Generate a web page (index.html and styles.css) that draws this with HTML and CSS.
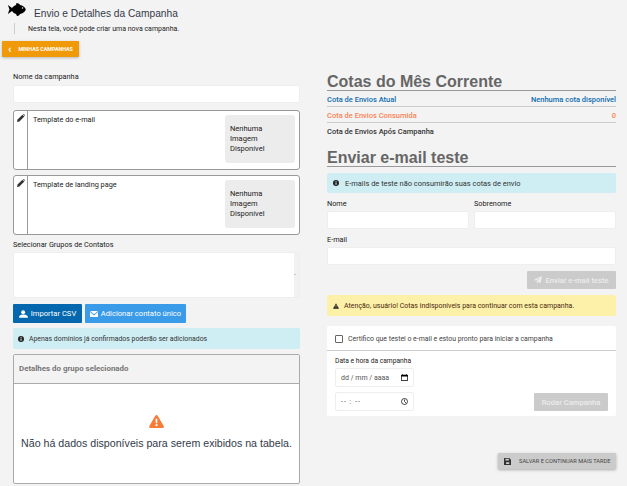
FILE: index.html
```html
<!DOCTYPE html>
<html lang="en">
<head>
    <meta charset="UTF-8">
    <meta name="viewport" content="width=device-width, initial-scale=1.0">
    <title>Envio e Detalhes da Campanha</title>
    <link rel="stylesheet" href="styles.css">
</head>
<body>
    <div class="page-header">
        <svg class="fish" viewBox="0 0 18 13"><path d="M0 2 L4 5 C5 3.500 6.500 2.500 8 2 L8.500 0 C10 0 11.500 .8 12 2 C14.500 2.300 17 4 17.800 6.500 C17 9 14.500 10.700 12 11 C11.500 12.500 10 13 9 13 L8 11 C6.500 10.500 5 9.500 4 8 L0 11 C.5 8.500 1 7.500 1.500 6.500 C1 5 .3 3.500 0 2 Z"/><circle cx="14.500" cy="5" r=".8" fill="#f3f3f3"/></svg>
        <div class="title">Envio e Detalhes da Campanha</div>
    </div>
    <div class="subtitle">Nesta tela, você pode criar uma nova campanha.</div>
    <a href="#" class="back-button"><span class="chevron">‹</span>MINHAS CAMPANHAS</a>

    <div class="columns">
        <div class="col-left">
            <label class="field-label">Nome da campanha</label>
            <input type="text" class="text-input name-input">

            <div class="template-card">
                <div class="edit-col">
                    <svg viewBox="0 0 10 10"><path d="M0 10 L.7 7 L6.800 .9 L9.100 3.200 L3 9.300 Z"/><path d="M7.400 .4 L8 0 C8.400 -.1 9.800 1.200 10 1.900 L9.600 2.600 Z"/></svg>
                </div>
                <div class="template-name">Template do e-mail</div>
                <div class="no-image">Nenhuma<br>Imagem<br>Disponível</div>
            </div>
            <div class="template-card">
                <div class="edit-col">
                    <svg viewBox="0 0 10 10"><path d="M0 10 L.7 7 L6.800 .9 L9.100 3.200 L3 9.300 Z"/><path d="M7.400 .4 L8 0 C8.400 -.1 9.800 1.200 10 1.900 L9.600 2.600 Z"/></svg>
                </div>
                <div class="template-name">Template de landing page</div>
                <div class="no-image">Nenhuma<br>Imagem<br>Disponível</div>
            </div>

            <label class="field-label groups-label">Selecionar Grupos de Contatos</label>
            <div class="groups-box"><div class="groups-scroll">.</div></div>

            <div class="button-row">
                <a href="#" class="btn btn-dark">
                    <svg viewBox="0 0 12 10" width="9" height="8"><circle cx="5.500" cy="2.600" r="2.600"/><path d="M0 10 C0 6.600 2 5.600 5.500 5.600 C9 5.600 12 6.600 12 10 Z"/></svg>
                    Importar CSV
                </a>
                <a href="#" class="btn btn-light">
                    <svg viewBox="0 0 12 9" width="8" height="6"><path d="M0 0 H12 L6 5 Z"/><path d="M0 1.600 L6 6.600 L12 1.600 V9 H0 Z"/></svg>
                    Adicionar contato único
                </a>
            </div>

            <div class="alert alert-info">
                <svg class="alert-icon" viewBox="0 0 10 10"><circle cx="5" cy="5" r="5"/><rect x="4.200" y="4.200" width="1.700" height="3.800" fill="#cfeef4"/><rect x="4.200" y="1.900" width="1.700" height="1.500" fill="#cfeef4"/></svg>
                Apenas domínios já confirmados poderão ser adicionados
            </div>

            <div class="details-panel">
                <div class="details-head">Detalhes do grupo selecionado</div>
                <div class="details-body">
                    <svg viewBox="0 0 16 14" width="15" height="13"><path fill-rule="evenodd" fill="#f97a37" d="M8 0 C8.600 0 9 .3 9.300 .8 L15.800 12 C16.300 13 15.700 14 14.600 14 H1.400 C.3 14 -.3 13 .2 12 L6.700 .8 C7 .3 7.400 0 8 0 Z M7 4 L7.200 8.800 H8.800 L9 4 Z M8 9.800 A1.200 1.200 0 1 0 8 12.200 A1.200 1.200 0 1 0 8 9.800 Z"/></svg>
                    <p>Não há dados disponíveis para serem exibidos na tabela.</p>
                </div>
            </div>
        </div>

        <div class="col-right">
            <h2 class="section-title">Cotas do Mês Corrente</h2>
            <div class="quota-row quota-blue"><span>Cota de Envios Atual</span><span>Nenhuma cota disponível</span></div>
            <div class="quota-row quota-orange"><span>Cota de Envios Consumida</span><span>0</span></div>
            <div class="quota-row quota-plain"><span>Cota de Envios Após Campanha</span></div>

            <h2 class="section-title test-title">Enviar e-mail teste</h2>
            <div class="alert alert-info test-alert">
                <svg class="alert-icon" viewBox="0 0 10 10"><circle cx="5" cy="5" r="5"/><rect x="4.200" y="4.200" width="1.700" height="3.800" fill="#cfeef4"/><rect x="4.200" y="1.900" width="1.700" height="1.500" fill="#cfeef4"/></svg>
                E-mails de teste não consumirão suas cotas de envio
            </div>

            <div class="name-grid">
                <div>
                    <label class="field-label">Nome</label>
                    <input type="text" class="text-input">
                </div>
                <div>
                    <label class="field-label">Sobrenome</label>
                    <input type="text" class="text-input">
                </div>
            </div>
            <label class="field-label email-label">E-mail</label>
            <input type="text" class="text-input">

            <div class="send-row">
                <a href="#" class="btn btn-disabled send-button">
                    <svg viewBox="0 0 10 10" width="8" height="8"><path d="M10 0 L8.400 8.800 L5.200 7.400 L3.800 9.600 L3.400 6.600 L8.200 2 L2.400 5.800 L0 4.800 Z"/></svg>
                    Enviar e-mail teste
                </a>
            </div>

            <div class="alert alert-warning">
                <svg class="alert-icon" viewBox="0 0 10 9"><path fill-rule="evenodd" d="M5 0 L10 9 H0 Z M4.500 3 V6 H5.500 V3 Z M4.500 6.800 V7.800 H5.500 V6.800 Z"/></svg>
                Atenção, usuário! Cotas indisponíveis para continuar com esta campanha.
            </div>

            <div class="launch-card">
                <label class="confirm-row"><span class="checkbox"></span>Certifico que testei o e-mail e estou pronto para iniciar a campanha</label>
                <div class="launch-body">
                    <div class="date-fields">
                        <label class="date-label">Data e hora da campanha</label>
                        <div class="date-input">
                            <span>dd / mm / aaaa</span>
                            <svg viewBox="0 0 10 10" width="7" height="7"><path fill-rule="evenodd" d="M1 1 H9 C9.500 1 10 1.500 10 2 V9 C10 9.500 9.500 10 9 10 H1 C.5 10 0 9.500 0 9 V2 C0 1.500 .5 1 1 1 Z M1 3.500 V9 H9 V3.500 Z"/><rect x="2" y="0" width="1" height="2"/><rect x="7" y="0" width="1" height="2"/></svg>
                        </div>
                        <div class="date-input">
                            <span class="time-text">-- : --</span>
                            <svg viewBox="0 0 10 10" width="7" height="7" fill="none" stroke="#222" stroke-width="1.200"><circle cx="5" cy="5" r="4.300"/><path d="M5 2.200 V5 L7.200 7.200"/></svg>
                        </div>
                    </div>
                    <a href="#" class="btn btn-disabled run-button">Rodar Campanha</a>
                </div>
            </div>

            <div class="save-row">
                <a href="#" class="save-button">
                    <svg viewBox="0 0 10 10" width="7" height="7"><path fill-rule="evenodd" d="M0 0 H7.500 L10 2.500 V10 H0 Z M2 1 V3.500 H7 V1 Z M3 6 V8.500 H7.500 V6 Z"/></svg>
                    SALVAR E CONTINUAR MAIS TARDE
                </a>
            </div>
        </div>
    </div>
</body>
</html>
```

FILE: styles.css
```css
* {
    box-sizing: border-box;
}
body {
    margin: 0;
    padding: 0;
    height: 486px;
    overflow: hidden;
    background-color: #f3f3f3;
    color: #333;
    font-family: Roboto, "Liberation Sans", sans-serif;
    font-size: 8px;
}
.page-header {
    display: flex;
    align-items: flex-start;
    height: 22px;
    padding: 3px 0 0 8px;
}
.fish {
    width: 18px;
    height: 13px;
}
.title {
    font-family: "Liberation Sans", sans-serif;
    font-size: 10.2px;
    color: #333a4a;
    margin: 5px 0 0 8px;
}
.subtitle {
    height: 11px;
    line-height: 12px;
    margin: 1px 0 0 14px;
    padding-left: 13px;
    border-left: 1px solid #ccc;
    color: #222;
    font-size: 7px;
}
.back-button {
    display: flex;
    align-items: center;
    width: 77px;
    height: 16px;
    margin: 7px 0 0 2px;
    padding-left: 6px;
    background-color: #f09a0a;
    border-radius: 1px;
    box-shadow: 0 1px 3px rgba(0, 0, 0, 0.25);
    color: white;
    font-size: 5.3px;
    font-weight: 700;
    text-decoration: none;
}
.chevron {
    font-size: 11px;
    line-height: 11px;
    margin-right: 7px;
}
.columns {
    display: flex;
    padding: 0 11px 0 13px;
    gap: 27px;
}
.col-left {
    width: 287px;
    padding-top: 15px;
}
.col-right {
    width: 289px;
    padding-top: 14px;
}
.field-label {
    display: block;
    height: 12px;
    line-height: 10px;
    color: #222;
    font-size: 7.3px;
}
.text-input {
    display: block;
    width: 100%;
    height: 18px;
    background-color: white;
    border: 1px solid #eee;
    border-radius: 2px;
}
.name-input {
    margin-top: 1px;
}
.template-card {
    display: flex;
    height: 60px;
    margin-top: 7px;
    background-color: white;
    border: 1px solid #999;
    border-radius: 3px;
}
.template-card + .template-card {
    margin-top: 5px;
}
.edit-col {
    width: 14px;
    border-right: 1px solid #999;
    padding: 3px 0 0 3px;
}
.edit-col svg {
    display: block;
    width: 8px;
    height: 8px;
    fill: #333;
}
.template-name {
    flex: 1;
    padding: 4px 0 0 5px;
    color: #222;
    font-size: 7.3px;
}
.no-image {
    width: 70px;
    height: 48px;
    margin: 4px 4px 0 0;
    padding: 9px 0 0 5px;
    background-color: #ececec;
    border-radius: 3px;
    color: #222;
    font-size: 7.5px;
    line-height: 10px;
}
.groups-label {
    margin-top: 5px;
}
.groups-box {
    display: flex;
    justify-content: flex-end;
    height: 46px;
    background-color: white;
    border: 1px solid #eee;
    border-radius: 2px;
}
.groups-scroll {
    width: 5px;
    padding-top: 16px;
    background-color: #f1f1f1;
    color: #555;
    font-size: 7px;
}
.button-row {
    display: flex;
    gap: 3px;
    margin-top: 6px;
}
.btn {
    display: flex;
    align-items: center;
    justify-content: center;
    gap: 3px;
    height: 19px;
    border-radius: 1px;
    color: white;
    font-size: 7.6px;
    text-decoration: none;
}
.btn svg {
    fill: currentColor;
}
.btn-dark {
    width: 69px;
    background-color: #0568ae;
}
.btn-light {
    width: 101px;
    background-color: #3a9be8;
}
.btn-disabled {
    background-color: #cbcbcb;
    color: #ececec;
    font-weight: 500;
}
.alert {
    display: flex;
    align-items: center;
    height: 21px;
    margin-top: 5px;
    padding-left: 5px;
    border-radius: 2px;
    color: #333;
    font-size: 6.9px;
}
.alert-icon {
    width: 6px;
    height: 6px;
    margin-right: 5px;
    flex-shrink: 0;
    fill: #222;
}
.alert-info {
    background-color: #cfeef4;
}
.alert-warning {
    margin-top: 6px;
    padding-left: 6px;
    background-color: #fdf0a8;
    color: #4a2a10;
    font-size: 7px;
}
.details-panel {
    height: 130px;
    margin-top: 5px;
    background-color: white;
    border: 1px solid #aaa;
    border-radius: 2px;
}
.details-head {
    height: 29px;
    padding: 9px 0 0 5px;
    background-color: #f3f3f3;
    border-bottom: 1px solid #aaa;
    color: #777;
    font-size: 7.9px;
    font-weight: 700;
}
.details-body {
    padding-top: 31px;
    text-align: center;
}
.details-body svg {
    display: block;
    margin: 0 auto;
}
.details-body p {
    margin: 9px 0 0 0;
    font-family: "Liberation Sans", sans-serif;
    font-size: 10.65px;
    color: #333a4a;
    white-space: nowrap;
}
.section-title {
    height: 20px;
    margin: 0;
    border-bottom: 1px solid #999;
    color: #666;
    font-family: "Liberation Sans", sans-serif;
    font-size: 16px;
    font-weight: 700;
    line-height: 22px;
}
.quota-row {
    display: flex;
    justify-content: space-between;
    align-items: center;
    height: 16px;
    padding-top: 1px;
    border-bottom: 1px solid #ccc;
    font-size: 7.5px;
    font-weight: 500;
}
.quota-blue {
    color: #0d6cb0;
}
.quota-orange {
    color: #fb8354;
}
.quota-plain {
    border-bottom: 0;
    color: #333;
}
.test-title {
    margin-top: 8px;
}
.test-alert {
    height: 20px;
    margin-top: 6px;
    padding-left: 6px;
    font-size: 7.45px;
}
.test-alert .alert-icon {
    margin-right: 6px;
}
.name-grid {
    display: grid;
    grid-template-columns: 142px 142px;
    gap: 5px;
    margin-top: 6px;
}
.email-label {
    margin-top: 6px;
}
.send-row {
    display: flex;
    justify-content: flex-end;
    margin-top: 6px;
}
.send-button {
    width: 89px;
    height: 18px;
}
.launch-card {
    height: 90px;
    margin-top: 10px;
    background-color: white;
    border-radius: 2px;
}
.confirm-row {
    display: flex;
    align-items: center;
    height: 25px;
    padding: 1px 0 0 8px;
    border-bottom: 1px solid #ccc;
    color: #444;
    font-size: 6.9px;
}
.checkbox {
    width: 8px;
    height: 8px;
    margin-right: 5px;
    border: 1px solid #666;
    border-radius: 1px;
}
.launch-body {
    display: flex;
    justify-content: space-between;
    align-items: flex-end;
    padding: 5px 8px 0;
}
.date-label {
    display: block;
    height: 12px;
    line-height: 10px;
    color: #222;
    font-size: 6.7px;
}
.date-input {
    display: flex;
    align-items: center;
    justify-content: space-between;
    width: 79px;
    height: 19px;
    padding: 0 5px 0 5px;
    border: 1px solid #eee;
    border-radius: 2px;
    color: #555;
    font-size: 7px;
}
.date-input + .date-input {
    margin-top: 5px;
}
.time-text {
    letter-spacing: 1px;
}
.run-button {
    width: 74px;
    height: 18px;
}
.save-row {
    display: flex;
    justify-content: flex-end;
    margin-top: 37px;
}
.save-button {
    display: flex;
    align-items: center;
    gap: 8px;
    width: 118px;
    height: 16px;
    padding-left: 6px;
    background-color: #cbcbcb;
    border-radius: 1px;
    box-shadow: 0 1px 3px rgba(0, 0, 0, 0.3);
    color: #444;
    font-size: 5.7px;
    text-decoration: none;
    white-space: nowrap;
}
.save-button svg {
    fill: #333;
}
```
